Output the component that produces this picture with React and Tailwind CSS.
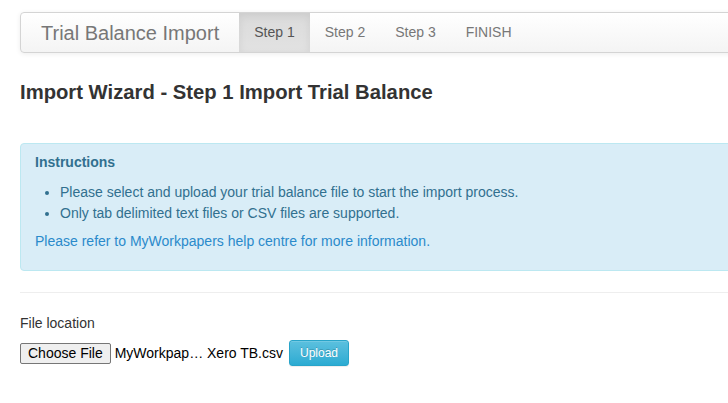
import React from 'react';

export default function App() {
  const steps = ['Step 1', 'Step 2', 'Step 3', 'FINISH'];

  return (
    <div className="w-[728px] h-[403px] overflow-hidden bg-white font-['Liberation_Sans',Arial,sans-serif] text-[14px] text-[#333]">
      <div className="pl-[20px] pt-[12px] w-[780px]">
        {/* Navbar */}
        <nav className="flex items-stretch h-[41px] border border-[#d4d4d4] rounded-[4px] bg-gradient-to-b from-white to-[#f4f4f4] shadow-[inset_0_1px_0_rgba(255,255,255,0.15),0_1px_5px_rgba(0,0,0,0.075)]">
          <div className="flex items-center pl-[20px] pr-[20px] text-[20px] text-[#777]">Trial Balance Import</div>
          {steps.map((s, i) => (
            <div
              key={s}
              className={`flex items-center px-[15px] text-[14px] ${i === 0 ? 'bg-gradient-to-b from-[#dbdbdb] to-[#e2e2e2] shadow-[inset_0_3px_9px_rgba(0,0,0,0.075)] text-[#555]' : 'text-[#777]'}`}
            >
              {s}
            </div>
          ))}
        </nav>

        {/* Heading */}
        <h3 className="mt-[28px] text-[20.25px] leading-[22px] font-bold text-[#333]">Import Wizard - Step 1 Import Trial Balance</h3>

        {/* Instructions */}
        <div className="mt-[40px] border border-[#bce8f1] rounded-[4px] bg-[#d9edf7] text-[#31708f] pl-[14px] pt-[8px] pb-[18px]">
          <div className="font-bold leading-[20px]">Instructions</div>
          <ul className="mt-[10px] list-disc pl-[25px] leading-[21px] marker:text-[#31708f]">
            <li>Please select and upload your trial balance file to start the import process.</li>
            <li>Only tab delimited text files or CSV files are supported.</li>
          </ul>
          <p className="mt-[7px] leading-[21px] text-[#2a8acb]">Please refer to MyWorkpapers help centre for more information.</p>
        </div>

        <hr className="mt-[21px] border-0 border-t border-[#eee]" />

        {/* File input */}
        <div className="mt-[20px] leading-[20px] text-[#333]">File location</div>
        <div className="mt-[7px] flex items-center">
          <div className="flex items-center">
            <button className="h-[21px] px-[7px] bg-[#efefef] border border-[#767676] rounded-[2px] text-[14px] text-black leading-none">Choose File</button>
            <span className="ml-[4px] text-[14px] text-black">MyWorkpap… Xero TB.csv</span>
          </div>
          <button className="ml-[6px] h-[26px] w-[60px] rounded-[3px] border border-[#28a4c9] bg-gradient-to-b from-[#5bc0de] to-[#2aabd2] text-white text-[12px] [text-shadow:0_-1px_0_rgba(0,0,0,0.2)] shadow-[inset_0_1px_0_rgba(255,255,255,0.15),0_1px_1px_rgba(0,0,0,0.075)]">
            Upload
          </button>
        </div>
      </div>
    </div>
  );
}
